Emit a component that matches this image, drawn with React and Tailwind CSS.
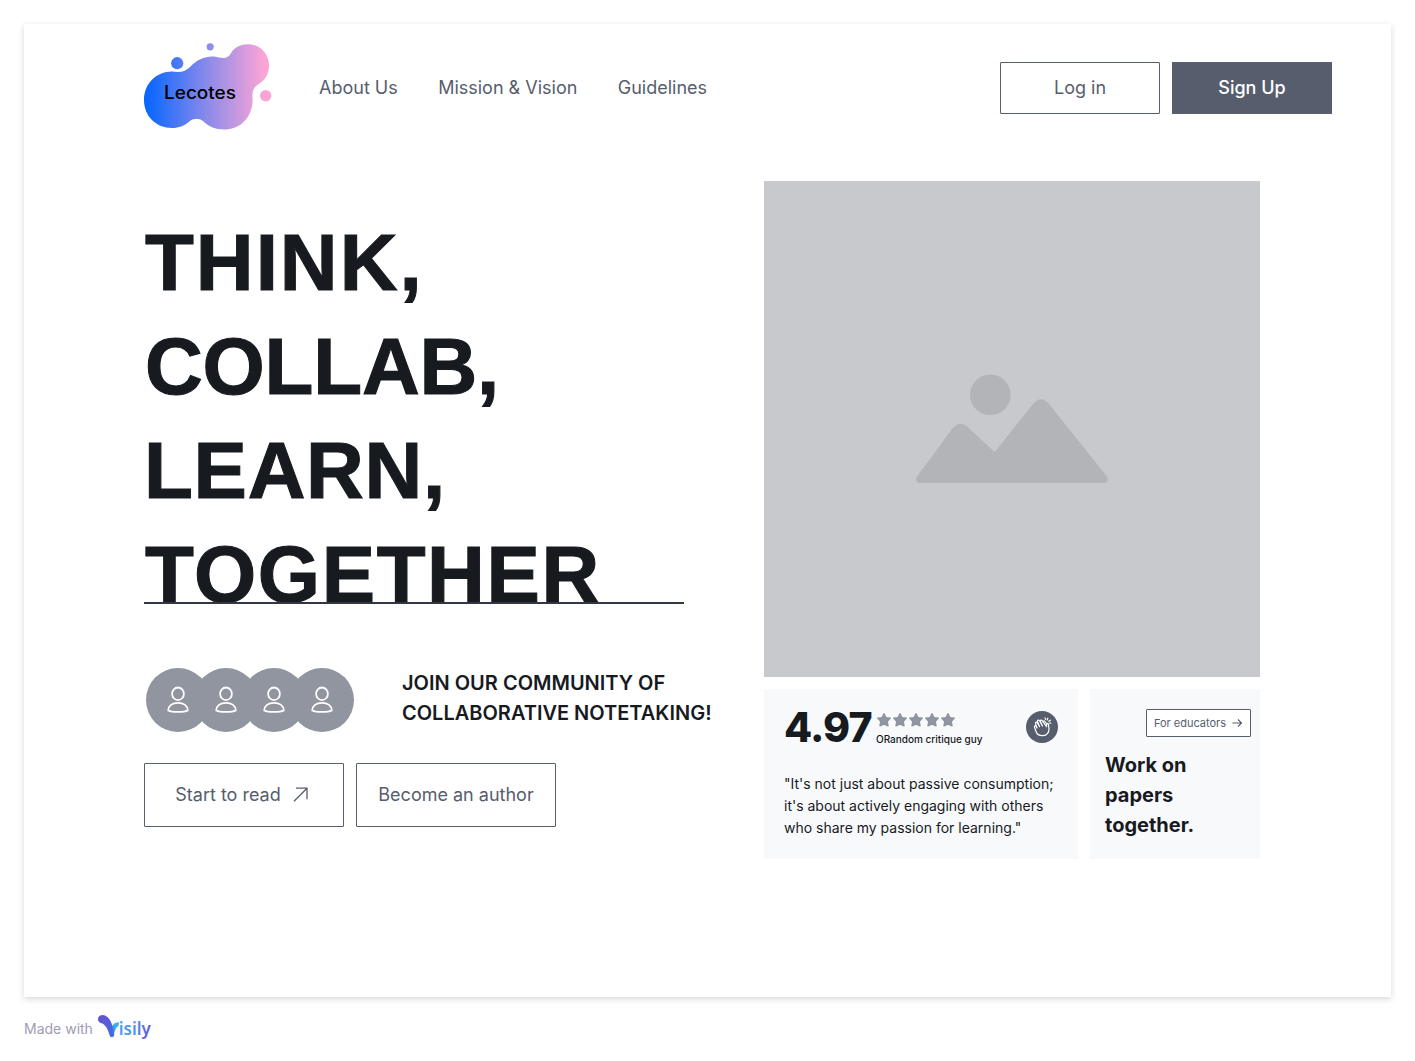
import React from "react";

function Logo() {
  return (
    <div className="relative h-[90px] w-[130px]">
      <svg viewBox="143 41 130 90" className="h-[90px] w-[130px]">
        <defs>
          <linearGradient id="blob" gradientUnits="userSpaceOnUse" x1="144" y1="0" x2="271" y2="0">
            <stop offset="0.02" stopColor="#0866ff" />
            <stop offset="0.5" stopColor="#8b8bea" />
            <stop offset="0.95" stopColor="#fda4d6" />
          </linearGradient>
        </defs>
        <g fill="url(#blob)">
          <path d="M172 71.500C181 73 186 71 190 67C197 59.500 205 56 214 56.500C222 58 227 60 231 53C235 47 241 44.300 248 44.300C260 44.300 269 53.500 269 65.500C269 73 266 79 260 83C254 87 252 90 252.500 98C253.500 115 242 129.500 225 129.500C215 129.500 208 126 203 121C199 118 194 118 190 121C185 125.500 179 128 172 128C156 128 144 116 144 100C144 84 156 71.500 172 71.500Z" />
          <circle cx="177.200" cy="63.200" r="6.100" />
          <circle cx="210.200" cy="46.800" r="3.600" />
          <circle cx="265.700" cy="95.700" r="5.700" />
        </g>
      </svg>
      <span className="absolute left-[21px] top-[38px] origin-left scale-x-[1.055] text-[18px] font-medium leading-[27px] text-black">Lecotes</span>
    </div>
  );
}

function Avatar() {
  return (
    <span className="-ml-4 flex size-16 items-center justify-center rounded-full bg-[#9095a0] first:ml-0">
      <svg viewBox="0 0 28 28" className="size-7" fill="none" stroke="white" strokeWidth="1.8">
        <ellipse cx="14" cy="7.800" rx="5.900" ry="6.300" />
        <path d="M4.200 24.500C4.500 19.500 8.500 16.800 14 16.800S23.500 19.500 23.800 24.500C20 26.400 8 26.400 4.200 24.500Z" strokeLinejoin="round" />
      </svg>
    </span>
  );
}

function Star() {
  return (
    <svg viewBox="0 0 16 16" className="size-4" fill="#9095a0" stroke="#9095a0" strokeWidth="1.4" strokeLinejoin="round">
      <path d="M8 1.800L9.900 5.600L14.300 6.100L11.200 9.400L12 13.800L8 12L4 13.800L4.800 9.400L1.700 6.100L6.100 5.600Z" />
    </svg>
  );
}

function Clap() {
  return (
    <span className="flex size-8 items-center justify-center rounded-full bg-[#565d6d]">
      <svg viewBox="0 0 20 20" className="size-5" fill="none" stroke="white" strokeWidth="1.200" strokeLinecap="round" strokeLinejoin="round">
        <path d="M4 14.500L2.500 10.200C2 8.800 3.600 8.200 4.200 9.400L5 11L3.500 6.500C3.200 5.100 4.800 4.600 5.400 5.900L7.600 9.700L5.500 4.500C5.100 3 6.800 2.400 7.500 3.800L10.500 8.900L8.400 4.500C8 3.100 9.500 2.500 10.200 3.700L14.600 9.700L14.500 7.500C14.600 6 16.300 6.200 16.500 7.500L17 12C17.200 15.500 14.600 18.500 11 18.700C7.500 18.900 5 17.400 4 14.500Z" />
        <path d="M11.300 5.300C11 3.900 12.300 3.400 13 4.500L14.700 7M13 .900L13.500 2.400M15.800 1.200L15.200 3M18.500 3.200L16.800 4.300M18.800 6.200L17.700 6.100" />
      </svg>
    </span>
  );
}

function Visily() {
  return (
    <span className="ml-[4px] flex h-7 items-center">
      <svg viewBox="0 0 58 28" className="h-7 w-[58px]">
        <defs>
          <linearGradient id="vMark" x1="0" y1="0" x2="0.8" y2="1">
            <stop offset="0.2" stopColor="#6255d4" />
            <stop offset="1" stopColor="#416ce5" />
          </linearGradient>
          <linearGradient id="vArm" x1="0" y1="1" x2="1" y2="0">
            <stop offset="0" stopColor="#4774e5" />
            <stop offset="0.7" stopColor="#37b5ee" />
          </linearGradient>
          <linearGradient id="word" gradientUnits="userSpaceOnUse" x1="21" y1="0" x2="54" y2="8">
            <stop offset="0" stopColor="#40a7eb" />
            <stop offset="0.6" stopColor="#5590e8" />
            <stop offset="1" stopColor="#625bd7" />
          </linearGradient>
        </defs>
        <path d="M13.500 22C13.500 14 15 8.500 22 8.300L21.500 12C18.500 13.500 18 17 16.500 21Z" fill="url(#vArm)" />
        <path d="M1 4.800C1.300 1.300 5.500 0 9 2C13 4.500 15 9.500 16 14L17.300 20.500C17 24 13.300 24 12.500 21C11.200 16.500 9.500 12 5.500 9.500C3 9 .800 7.500 1 4.800Z" fill="url(#vMark)" />
        <text x="21.800" y="20.600" fill="url(#word)" fontFamily="Noto Sans, sans-serif" fontSize="18.500" fontWeight="600" textLength="32" lengthAdjust="spacingAndGlyphs">isily</text>
      </svg>
    </span>
  );
}

export default function App() {
  return (
    <div className="flex h-[1061px] w-[1415px] flex-col bg-white px-6 pt-6 font-['Inter',sans-serif] text-[#171a1f]">
      <div className="flex h-[973px] w-[1367px] shrink-0 flex-col bg-white shadow-[0_2px_6px_rgba(23,26,31,0.17)]">
        <header className="flex h-[157px] items-start pl-[119px] pr-[59px] pt-[17px]">
          <Logo />
          <nav className="ml-[46px] mt-[33px] flex gap-[40.4px] text-[18px] leading-7 text-[#565d6d]">
            <a>About Us</a>
            <a>Mission &amp; Vision</a>
            <a>Guidelines</a>
          </nav>
          <div className="ml-auto mt-[21px] flex gap-3 text-[18px]">
            <button className="h-[52px] w-40 rounded-[1px] border border-[#565d6d] pb-[2px] text-[#565d6d]">Log in</button>
            <button className="h-[52px] w-40 bg-[#565d6d] pb-[2px] font-medium text-white">Sign Up</button>
          </div>
        </header>

        <main className="flex pl-[120px]">
          <section className="w-[620px] pt-[30px]">
            <h1 className="h-[391px] w-[540px] font-['Liberation_Sans',sans-serif] text-[80px] font-bold leading-[104px] [-webkit-text-stroke:1.1px_#171a1f]">
              <span className="block pl-px tracking-[2px]">THINK,</span>
              <span className="block pl-px tracking-[-0.2px]">COLLAB,</span>
              <span className="block tracking-[0.7px]">LEARN,</span>
              <span className="block pl-px tracking-[1.6px]">TOGETHER</span>
            </h1>
            <div className="relative h-[2px] w-[540px] bg-[#323743]" />
            <div className="mt-16 flex items-center pl-[2px]">
              <div className="flex">
                <Avatar /><Avatar /><Avatar /><Avatar />
              </div>
              <p className="ml-12 mt-[-4px] whitespace-nowrap text-[20px] font-semibold leading-[30px]">JOIN OUR COMMUNITY OF<br />COLLABORATIVE NOTETAKING!</p>
            </div>
            <div className="mt-[31px] flex gap-3 text-[18px] text-[#565d6d]">
              <button className="flex h-16 w-[200px] items-center justify-center gap-3 rounded-[1px] border border-[#565d6d] pb-[2px] pr-[4px]">
                Start to read
                <svg viewBox="0 0 16 16" className="size-4" fill="none" stroke="currentColor" strokeWidth="1.300"><path d="M1 15.200L14 2.200M3 2.200H14V13.200" /></svg>
              </button>
              <button className="h-16 w-[200px] rounded-[1px] border border-[#565d6d] pb-[2px]">Become an author</button>
            </div>
          </section>

          <section className="w-[496px]">
            <div className="flex h-[496px] items-center justify-center bg-[#c8c9cc]">
              <svg viewBox="0 0.500 192 108" className="h-[108px] w-[192px] overflow-visible" fill="#b3b4b8">
                <circle cx="74.300" cy="20.300" r="20.300" />
                <path d="M1 102L36 54.500Q43.500 45.500 51 52L78 77Q78.500 77.500 80 76L117 29.500Q125 20 133 29.500L191 102Q193.500 106.500 189 108.500H3Q-1.500 106.500 1 102Z" />
              </svg>
            </div>
            <div className="mt-3 flex gap-3">
              <article className="h-[170px] w-[314px] bg-[#f8f9fb] px-5">
                <div className="flex h-[76px]">
                  <strong className="mt-[8px] w-[92px] whitespace-nowrap text-[41px] font-extrabold leading-[60px] tracking-[-0.8px]">4.97</strong>
                  <div className="pt-[23px]">
                    <div className="flex"><Star /><Star /><Star /><Star /><Star /></div>
                    <p className="mt-[4px] whitespace-nowrap text-[10px] font-medium leading-[15px]">ORandom critique guy</p>
                  </div>
                  <div className="ml-auto mt-[22px]"><Clap /></div>
                </div>
                <p className="mt-[8px] whitespace-nowrap text-[14px] leading-[22px]">"It's not just about passive consumption;<br />it's about actively engaging with others<br />who share my passion for learning."</p>
              </article>
              <article className="flex h-[170px] w-[170px] flex-col bg-[#f8f9fb] pl-[15px] pr-[9px] pt-5">
                <button className="flex h-7 w-[105px] items-center justify-center gap-[6px] self-end whitespace-nowrap rounded-[1px] border border-[#565d6d] bg-white text-[11px] text-[#565d6d]">
                  For educators
                  <svg viewBox="0 0 11 10" className="h-[10px] w-[11px]" fill="none" stroke="currentColor" strokeWidth="1.1"><path d="M.500 5H9.500M6 1.500L9.500 5L6 8.500" /></svg>
                </button>
                <p className="mt-[13px] text-[20px] font-bold leading-[30px]">Work on<br />papers<br />together.</p>
              </article>
            </div>
          </section>
        </main>
      </div>
      <footer className="mt-[17px] flex text-[14px] text-[#a29bb5]">
        <span className="mt-[3px] leading-[24px]">Made with</span>
        <Visily />
      </footer>
    </div>
  );
}
